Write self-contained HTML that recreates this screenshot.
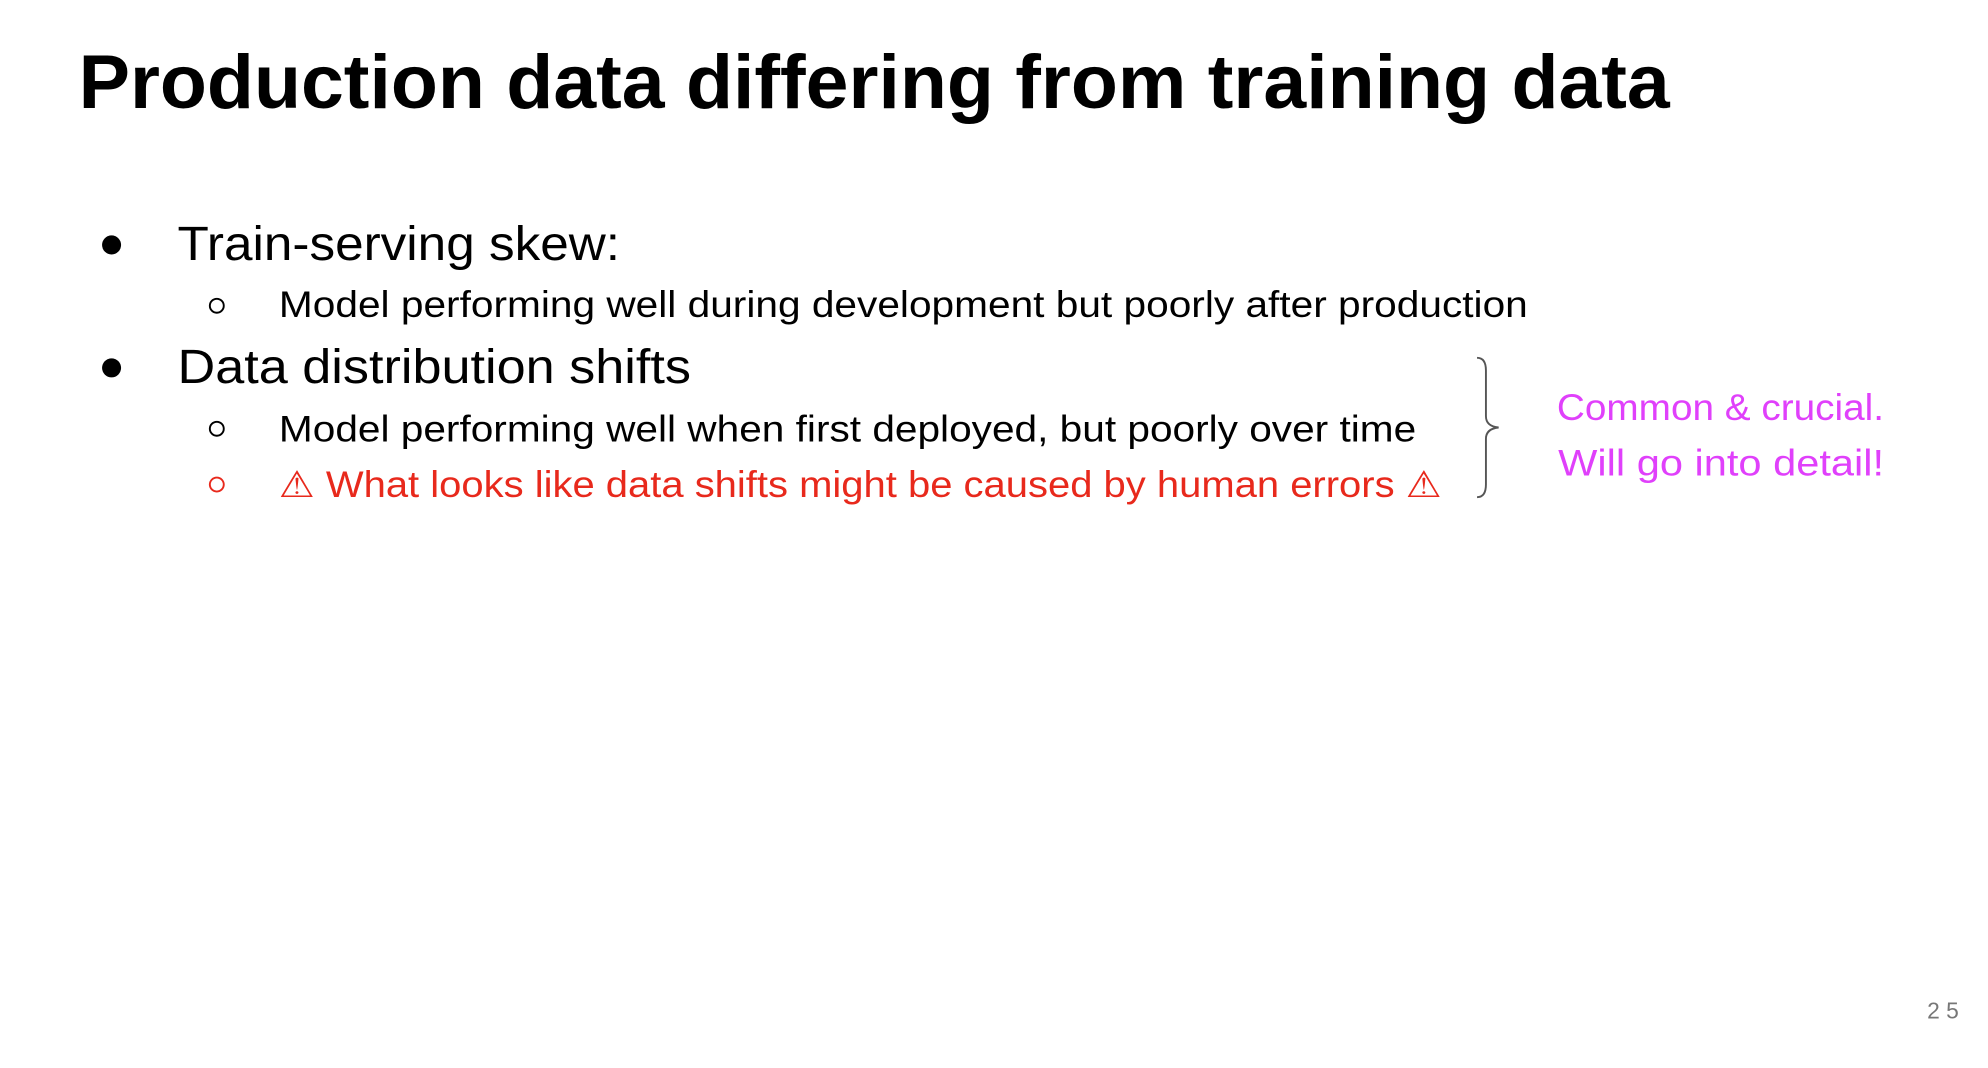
<!DOCTYPE html>
<html><head><meta charset="utf-8"><style>
html,body{margin:0;padding:0;background:#fff;width:1988px;height:1068px;overflow:hidden}
svg{display:block}
text{font-family:"Liberation Sans","DejaVu Sans",sans-serif}
</style></head><body>
<svg width="1988" height="1068" viewBox="0 0 1568 842" xmlns="http://www.w3.org/2000/svg">
<rect width="1568" height="842" fill="#fff"/>
<text x="62" y="85" font-size="60" font-weight="bold" fill="#000" textLength="1255" lengthAdjust="spacingAndGlyphs">Production data differing from training data</text>
<circle cx="88" cy="193" r="7.5" fill="#000"/>
<text x="140" y="205" font-size="38" fill="#000" textLength="349" lengthAdjust="spacingAndGlyphs">Train-serving skew:</text>
<circle cx="171" cy="241" r="5.5" fill="none" stroke="#000" stroke-width="1.5"/>
<text x="220" y="250" font-size="29" fill="#000" textLength="985" lengthAdjust="spacingAndGlyphs">Model performing well during development but poorly after production</text>
<circle cx="88" cy="290" r="7.5" fill="#000"/>
<text x="140" y="302" font-size="38" fill="#000" textLength="405" lengthAdjust="spacingAndGlyphs">Data distribution shifts</text>
<circle cx="171" cy="338" r="5.5" fill="none" stroke="#000" stroke-width="1.5"/>
<text x="220" y="348" font-size="29" fill="#000" textLength="897" lengthAdjust="spacingAndGlyphs">Model performing well when first deployed, but poorly over time</text>
<circle cx="171" cy="382" r="5.5" fill="none" stroke="#e8291c" stroke-width="1.5"/>
<text x="220" y="392" font-size="29" fill="#e8291c" textLength="917" lengthAdjust="spacingAndGlyphs">⚠ What looks like data shifts might be caused by human errors ⚠</text>
<path d="M1165,282 Q1172,282 1172,292 L1172,328 Q1172,336 1182,337 Q1172,338 1172,346 L1172,382 Q1172,392 1165,392" fill="none" stroke="#555" stroke-width="1.5"/>
<text x="1228" y="331" font-size="29" fill="#e040fb" textLength="258" lengthAdjust="spacingAndGlyphs">Common &amp; crucial.</text>
<text x="1229" y="375" font-size="29" fill="#e040fb" textLength="257" lengthAdjust="spacingAndGlyphs">Will go into detail!</text>
<text x="1520" y="803" font-size="18" fill="#777" textLength="25" lengthAdjust="spacing">25</text>
</svg>
</body></html>
